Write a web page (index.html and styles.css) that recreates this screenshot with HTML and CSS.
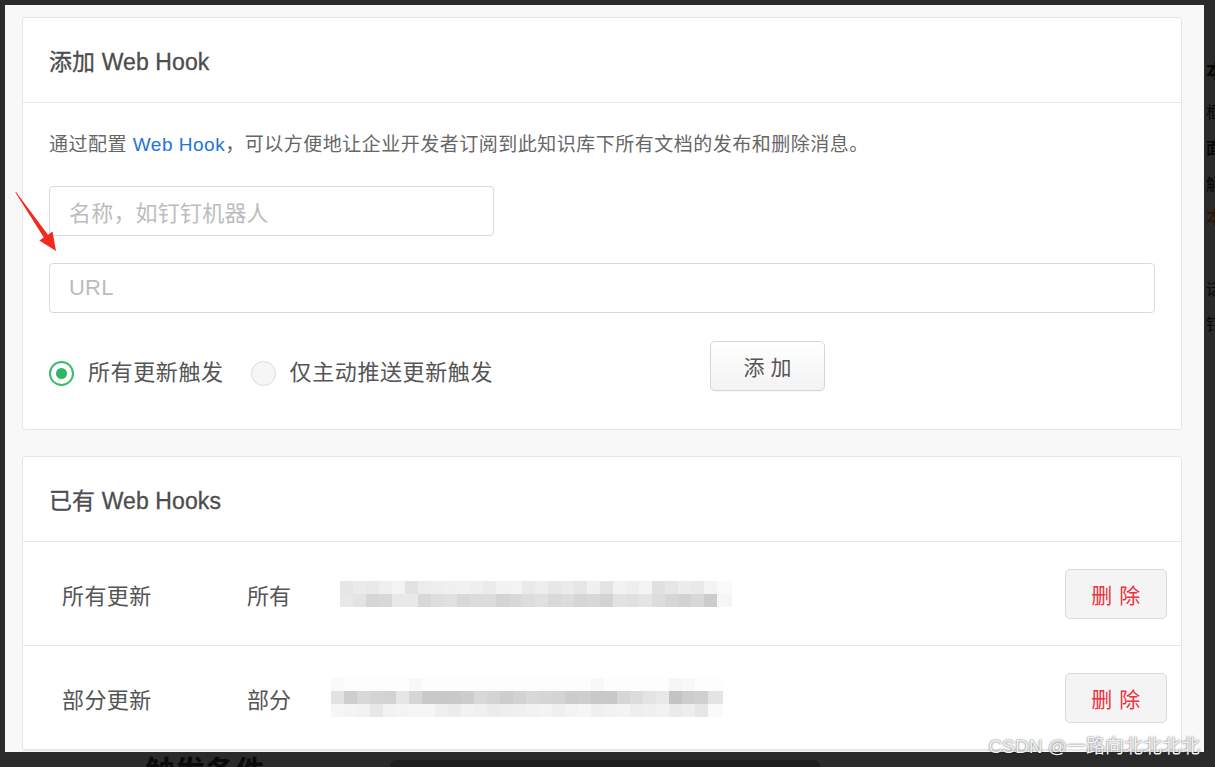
FILE: index.html
```html
<!DOCTYPE html>
<html lang="zh-CN">
<head>
<meta charset="utf-8">
<title>Web Hook</title>
<link rel="stylesheet" href="styles.css">
</head>
<body>
<div class="screen">
  <div class="main">
    <div class="window">
      <section class="card">
        <header class="card-head">添加 Web Hook</header>
        <div class="card-body">
          <p class="desc">通过配置 <a class="link">Web Hook</a>，可以方便地让企业开发者订阅到此知识库下所有文档的发布和删除消息。</p>
          <div class="input input-name"><span class="ph">名称，如钉钉机器人</span></div>
          <div class="input input-url"><span class="ph">URL</span></div>
          <div class="options">
            <div class="radios">
              <label class="radio checked"><span class="dot"></span><span class="rlabel">所有更新触发</span></label>
              <label class="radio"><span class="dot"></span><span class="rlabel">仅主动推送更新触发</span></label>
            </div>
            <button class="btn btn-add">添 加</button>
          </div>
        </div>
      </section>

      <section class="card card-list">
        <header class="card-head">已有 Web Hooks</header>
        <div class="row">
          <span class="c-name">所有更新</span>
          <span class="c-type">所有</span>
          <div class="mosaic m1"></div>
          <button class="btn btn-del">删 除</button>
        </div>
        <div class="row">
          <span class="c-name">部分更新</span>
          <span class="c-type">部分</span>
          <div class="mosaic m2"></div>
          <button class="btn btn-del">删 除</button>
        </div>
      </section>

      <svg class="arrow" width="70" height="80" viewBox="0 0 70 80">
        <polygon points="11,7 43,49.7 47.5,46.6 51,66 34.3,55.6 38.8,52.5 10.4,7.6" fill="#f5281f"/>
      </svg>
    </div>
    <div class="below">
      <span class="below-title">触发条件</span>
      <span class="below-field"></span>
    </div>
  </div>
  <div class="aside">
    <span class="a1">本</span>
    <span class="a2">框</span>
    <span class="a3">面</span>
    <span class="a4">解</span>
    <span class="a5">本</span>
    <span class="a6">话</span>
    <span class="a7">钉</span>
  </div>
</div>
<div class="watermark">CSDN @一路向北北北北</div>
</body>
</html>
```

FILE: styles.css
```css
* { box-sizing: border-box; }

html, body {
  margin: 0;
  padding: 0;
}

body {
  width: 1215px;
  height: 767px;
  overflow: hidden;
  background: #2b2b2b;
  font-family: "Liberation Sans", "Noto Sans CJK SC", sans-serif;
  position: relative;
}

.screen {
  display: flex;
  padding: 5px 0 0 5px;
  height: 767px;
}

.main {
  width: 1199px;
  display: flex;
  flex-direction: column;
  flex: none;
}

.window {
  position: relative;
  height: 747px;
  background: #f8f8f8;
  padding: 12px 22px 0 17px;
  overflow: hidden;
}

.card {
  background: #fff;
  border: 1px solid #e6e6e6;
  border-radius: 3px;
}

.card-list {
  margin-top: 26px;
}

.card-head {
  height: 85px;
  display: flex;
  align-items: center;
  padding: 0 26px;
  border-bottom: 1px solid #e9e9e9;
  font-size: 23px;
  color: #4d4d4d;
  letter-spacing: 0.1px;
  -webkit-text-stroke: 0.3px #4d4d4d;
}

.card-body {
  padding: 28px 26px 38px;
}

.desc {
  margin: 0;
  font-size: 19px;
  line-height: 28px;
  color: #666;
  letter-spacing: 0.5px;
}

.link {
  color: #1f73d9;
  text-decoration: none;
}

.input {
  height: 50px;
  border: 1px solid #d9d9d9;
  border-radius: 4px;
  background: #fff;
  display: flex;
  align-items: center;
  padding: 0 19px;
  margin-top: 27px;
}

.input-name { width: 445px; }
.input-url { width: 100%; }

.ph {
  font-size: 22px;
  color: #bcbcbc;
  letter-spacing: 0.2px;
}

.options {
  display: grid;
  grid-template-columns: 661px auto;
  align-items: start;
  margin-top: 28px;
}

.radios {
  display: flex;
  align-items: center;
  gap: 27px;
  margin-top: 17px;
  height: 30px;
}

.radio {
  display: flex;
  align-items: center;
  gap: 14px;
}

.dot {
  width: 25px;
  height: 25px;
  border-radius: 50%;
  border: 1.5px solid #dcdcdc;
  background: #f6f6f6;
  display: flex;
  align-items: center;
  justify-content: center;
}

.radio.checked .dot {
  border: 2px solid #37bb6d;
  background: #fff;
}

.radio.checked .dot::after {
  content: "";
  width: 11px;
  height: 11px;
  border-radius: 50%;
  background: #2fb665;
}

.rlabel {
  font-size: 22px;
  line-height: 30px;
  color: #555;
  letter-spacing: 0.6px;
}

.btn {
  font-family: inherit;
  height: 50px;
  border-radius: 5px;
  font-size: 21px;
  padding: 0;
  cursor: pointer;
}

.btn-add {
  width: 115px;
  border: 1px solid #d6d6d6;
  background: linear-gradient(#ffffff, #f3f3f3);
  color: #555;
  box-shadow: 0 1px 1px rgba(0, 0, 0, 0.04);
}

.row {
  height: 104px;
  display: flex;
  align-items: center;
  padding: 0 14px 0 39px;
  border-bottom: 1px solid #e9e9e9;
}

.c-name {
  width: 185px;
  font-size: 22px;
  color: #555;
  letter-spacing: 0.4px;
}

.c-type {
  width: 93px;
  font-size: 22px;
  color: #555;
}

.btn-del {
  margin-left: auto;
  width: 102px;
  border: 1px solid #dadada;
  background: #f4f4f4;
  color: #ef2f3c;
  letter-spacing: 0.5px;
}

.mosaic {
  width: 392px;
  background-repeat: no-repeat;
}

.m1 {
  height: 26px;
  background-image:
    linear-gradient(90deg, #e6e6e6 0 13px, #ebebeb 13px 26px, #e9e9e9 26px 39px, #efefef 39px 52px, #f3f3f3 52px 65px, #e2e2e2 65px 78px, #ececec 78px 91px, #eeeeee 91px 104px, #f0f0f0 104px 117px, #f1f1f1 117px 130px, #efefef 130px 143px, #ebebeb 143px 156px, #f2f2f2 156px 169px, #f3f3f3 169px 182px, #eaeaea 182px 195px, #eeeeee 195px 208px, #e7e7e7 208px 221px, #ebebeb 221px 234px, #e6e6e6 234px 247px, #f0f0f0 247px 260px, #e4e4e4 260px 273px, #f2f2f2 273px 286px, #eeeeee 286px 299px, #f4f4f4 299px 312px, #e0e0e0 312px 325px, #e6e6e6 325px 338px, #ececec 338px 351px, #e9e9e9 351px 364px, #f3f3f3 364px 377px, #fafafa 377px 392px),
    linear-gradient(90deg, #e8e8e8 0 13px, #e3e3e3 13px 26px, #d6d6d6 26px 39px, #d8d8d8 39px 52px, #e8e8e8 52px 65px, #e9e9e9 65px 78px, #d8d8d8 78px 91px, #dedede 91px 104px, #e0e0e0 104px 117px, #d8d8d8 117px 130px, #dcdcdc 130px 143px, #dcdcdc 143px 156px, #d4d4d4 156px 169px, #d8d8d8 169px 182px, #dddddd 182px 195px, #e0e0e0 195px 208px, #d9d9d9 208px 221px, #dcdcdc 221px 234px, #d6d6d6 234px 247px, #d8d8d8 247px 260px, #d3d3d3 260px 273px, #e2e2e2 273px 286px, #e0e0e0 286px 299px, #e4e4e4 299px 312px, #dcdcdc 312px 325px, #d6d6d6 325px 338px, #d2d2d2 338px 351px, #d8d8d8 351px 364px, #cccccc 364px 377px, #f6f6f6 377px 392px);
  background-size: 392px 13px, 392px 13px;
  background-position: 0 0, 0 13px;
}

.m2 {
  height: 39px;
  margin-left: -9px;
  background-image:
    linear-gradient(90deg, #fafafa 0 13px, #fdfdfd 13px 78px, #f8f8f8 78px 91px, #fdfdfd 91px 260px, #f8f8f8 260px 273px, #fdfdfd 273px 338px, #f6f6f6 338px 351px, #f8f8f8 351px 364px, #fdfdfd 364px 392px),
    linear-gradient(90deg, #e2e2e2 0 13px, #cecece 13px 26px, #d8d8d8 26px 39px, #d4d4d4 39px 52px, #d2d2d2 52px 65px, #e6e6e6 65px 78px, #d6d6d6 78px 91px, #c9c9c9 91px 104px, #c8c8c8 104px 117px, #c9c9c9 117px 130px, #cccccc 130px 143px, #d8d8d8 143px 156px, #d4d4d4 156px 169px, #cdcdcd 169px 182px, #d2d2d2 182px 195px, #d8d8d8 195px 208px, #d6d6d6 208px 221px, #d4d4d4 221px 234px, #cccccc 234px 247px, #cecece 247px 260px, #c9c9c9 260px 273px, #c8c8c8 273px 286px, #d6d6d6 286px 299px, #dcdcdc 299px 312px, #e4e4e4 312px 325px, #e8e8e8 325px 338px, #c4c4c4 338px 351px, #cccccc 351px 364px, #d0d0d0 364px 377px, #e4e4e4 377px 392px),
    linear-gradient(90deg, #f6f6f6 0 13px, #f4f4f4 13px 26px, #f2f2f2 26px 39px, #e8e8e8 39px 52px, #f2f2f2 52px 65px, #f4f4f4 65px 78px, #f6f6f6 78px 91px, #f6f6f6 91px 104px, #f0f0f0 104px 117px, #ececec 117px 130px, #f2f2f2 130px 143px, #f0f0f0 143px 156px, #ececec 156px 169px, #eeeeee 169px 182px, #f0f0f0 182px 195px, #f2f2f2 195px 208px, #f4f4f4 208px 221px, #f0f0f0 221px 234px, #f4f4f4 234px 247px, #f6f6f6 247px 260px, #f0f0f0 260px 273px, #f2f2f2 273px 286px, #f4f4f4 286px 299px, #eeeeee 299px 312px, #f0f0f0 312px 325px, #f2f2f2 325px 338px, #eaeaea 338px 351px, #eeeeee 351px 364px, #e6e6e6 364px 377px, #fafafa 377px 392px);
  background-size: 392px 13px, 392px 13px, 392px 13px;
  background-position: 0 0, 0 13px, 0 26px;
}

.arrow {
  position: absolute;
  left: 0;
  top: 180px;
}

.below {
  height: 15px;
  display: flex;
  align-items: flex-start;
  padding-left: 140px;
  overflow: hidden;
}

.below-title {
  font-family: "Noto Sans CJK SC", sans-serif;
  font-size: 30px;
  line-height: 30px;
  font-weight: 700;
  color: #0a0a0a;
  margin-top: 2px;
}

.below-field {
  margin-left: 125px;
  margin-top: 8px;
  width: 430px;
  height: 20px;
  border-radius: 6px;
  background: #1e1e1e;
}

.aside {
  flex: 1;
  overflow: hidden;
  display: flex;
  flex-direction: column;
  padding: 55px 0 0 2px;
  font-family: "Noto Sans CJK SC", sans-serif;
  color: #070707;
  white-space: nowrap;
}

.aside span {
  display: block;
  font-size: 16px;
  line-height: 20px;
}

.aside .a1 { font-size: 19px; font-weight: 700; }
.aside .a2 { margin-top: 21px; }
.aside .a3 { margin-top: 16px; font-weight: 700; }
.aside .a4 { margin-top: 16px; }
.aside .a5 { margin-top: 13px; font-size: 18px; color: #2a1208; }
.aside .a6 { margin-top: 52px; }
.aside .a7 { margin-top: 15px; }

.watermark {
  position: absolute;
  right: 15px;
  top: 735px;
  font-size: 19px;
  line-height: 24px;
  color: #f2f2f2;
  text-shadow: 0 0 2px rgba(0, 0, 0, 0.7);
  font-family: "Liberation Sans", "Noto Sans CJK SC", sans-serif;
}
```
